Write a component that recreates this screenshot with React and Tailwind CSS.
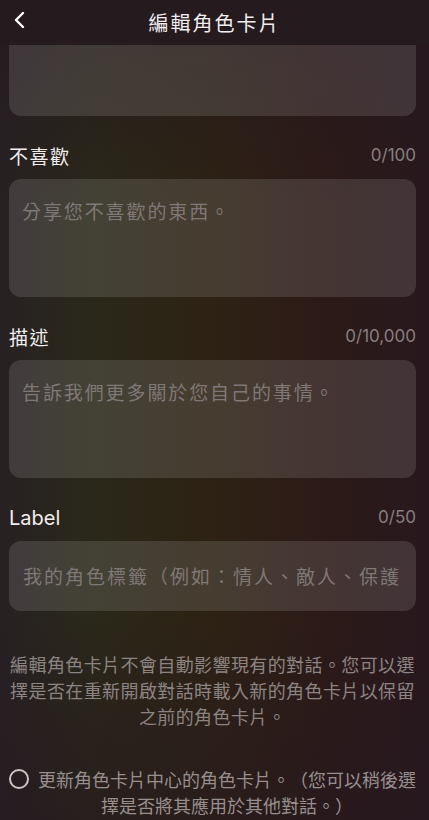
import React from 'react';

const cjkStack = "font-['Noto_Sans_CJK_TC','Noto_Sans',sans-serif]";
const latinStack = "font-['Inter','Noto_Sans_CJK_TC',sans-serif]";

function FieldSection({ label, count, placeholder }) {
  return (
    <section className="mt-[26px]">
      <div className="flex h-[28px] items-center justify-between">
        <span className="text-[19px] tracking-[1.5px] text-[#f2eeee]">{label}</span>
        <span className={`text-[17px] text-[#877f7e] ${latinStack}`}>{count}</span>
      </div>
      <div className="mt-[9px] h-[118px] rounded-[12px] bg-white/[0.12] px-[13px] pt-[19px]">
        <p className="text-[19px] leading-[26px] tracking-[1.9px] text-[#7f7876]">{placeholder}</p>
      </div>
    </section>
  );
}

export default function App() {
  return (
    <main
      className={`relative h-[820px] w-[429px] overflow-hidden [text-spacing-trim:space-all] bg-[linear-gradient(180deg,rgba(36,24,30,0.7)_0%,rgba(36,24,30,0)_25%,rgba(36,24,30,0)_75%,rgba(38,24,32,0.6)_100%),linear-gradient(90deg,#272123_0%,#2a2819_22%,#2e2214_50%,#2c1a17_75%,#28181e_100%)] ${cjkStack}`}
    >
      <header className="relative z-10 flex h-[45px] items-center justify-center bg-[#251b1f]">
        <button type="button" className="absolute left-[13px] top-[11px] p-0">
          <svg width="14" height="18" viewBox="0 0 14 18" fill="none">
            <path d="M10 2 L3 9 L10 16" stroke="#ffffff" strokeWidth="2.4" strokeLinecap="round" strokeLinejoin="round" />
          </svg>
        </button>
        <h1 className="text-[20px] tracking-[2px] text-[#f2eeee]">編輯角色卡片</h1>
      </header>

      <div className="pl-[9px] pr-[13px]">
        <div className="h-[71px] rounded-b-[12px] bg-white/[0.12]" />

        <FieldSection label="不喜歡" count="0/100" placeholder="分享您不喜歡的東西。" />
        <FieldSection label="描述" count="0/10,000" placeholder="告訴我們更多關於您自己的事情。" />

        <section className="mt-[26px]">
          <div className="flex h-[28px] items-center justify-between">
            <span className={`text-[20px] text-[#f2eeee] ${latinStack}`}>Label</span>
            <span className={`text-[17px] text-[#877f7e] ${latinStack}`}>0/50</span>
          </div>
          <div className="mt-[9px] flex h-[70px] items-center rounded-[12px] bg-white/[0.12] px-[14px]">
            <p className="overflow-hidden whitespace-nowrap text-[19px] tracking-[2px] text-[#7f7876]">
              我的角色標籤（例如：情人、敵人、保護
            </p>
          </div>
        </section>

        <p className="mt-[40px] text-center text-[18px] leading-[26px] tracking-[0.4px] text-[#8c8483]">
          編輯角色卡片不會自動影響現有的對話。您可以選
          <br />
          擇是否在重新開啟對話時載入新的角色卡片以保留
          <br />
          之前的角色卡片。
        </p>

        <label className="mt-[37px] flex items-start gap-[9px]">
          <span className="mt-[3px] h-[20px] w-[20px] shrink-0 rounded-full border-2 border-[#cbc5c4]" />
          <span className="flex-1 text-center text-[18px] leading-[26px] text-[#978f8e]">
            更新角色卡片中心的角色卡片。（您可以稍後選
            <br />
            擇是否將其應用於其他對話。）
          </span>
        </label>

        <div className="mx-[20px] mt-[2px] h-[50px] rounded-[14px] bg-white/[0.1]" />
      </div>
    </main>
  );
}
